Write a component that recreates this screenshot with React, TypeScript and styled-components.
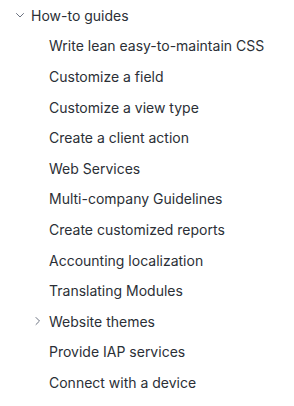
import React from "react";
import styled, { createGlobalStyle } from "styled-components";

const GlobalStyle = createGlobalStyle`
  body {
    margin: 0;
    background: #ffffff;
    font-family: Inter, "Noto Sans", sans-serif;
  }
`;

const Tree = styled.ul`
  list-style: none;
  margin: 0;
  padding: 0 0 0 15px;
`;

const Children = styled.ul`
  list-style: none;
  margin: 0;
  padding: 0 0 0 18px;
`;

const Row = styled.li`
  display: flex;
  align-items: center;
  height: 30.6px;
  font-size: 14px;
  color: #2b2f36;
  white-space: nowrap;
`;

const Caret = styled.span`
  width: 16px;
  display: flex;
  align-items: center;
  justify-content: flex-start;
  color: #6b7280;
`;

const items: { label: string; collapsed?: boolean }[] = [
  { label: "Write lean easy-to-maintain CSS" },
  { label: "Customize a field" },
  { label: "Customize a view type" },
  { label: "Create a client action" },
  { label: "Web Services" },
  { label: "Multi-company Guidelines" },
  { label: "Create customized reports" },
  { label: "Accounting localization" },
  { label: "Translating Modules" },
  { label: "Website themes", collapsed: true },
  { label: "Provide IAP services" },
  { label: "Connect with a device" },
];

const Chevron = ({ down }: { down?: boolean }) => (
  <svg width="10" height="10" viewBox="0 0 10 10" fill="none">
    <path
      d={down ? "M1.5 3.5 L5 7 L8.5 3.5" : "M3 1.5 L6.5 5 L3 8.5"}
      stroke="currentColor"
      strokeWidth="1"
      strokeLinecap="round"
      strokeLinejoin="round"
    />
  </svg>
);

export default function App() {
  return (
    <>
      <GlobalStyle />
      <Tree>
        <Row>
          <Caret>
            <Chevron down />
          </Caret>
          How-to guides
        </Row>
        <li>
          <Children>
            {items.map((it) => (
              <Row key={it.label}>
                <Caret>{it.collapsed ? <Chevron /> : null}</Caret>
                {it.label}
              </Row>
            ))}
          </Children>
        </li>
      </Tree>
    </>
  );
}
